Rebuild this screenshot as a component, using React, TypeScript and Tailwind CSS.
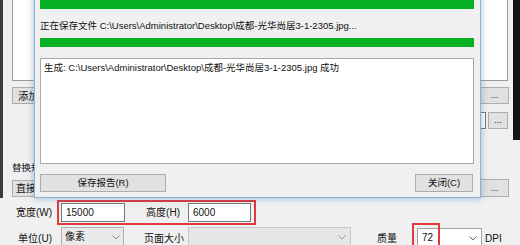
import React from "react";

const Chevron = ({ color = "#606060" }: { color?: string }) => (
  <svg width="8" height="5" viewBox="0 0 8 5" className="shrink-0">
    <polyline points="0.5,0.5 4,4 7.5,0.5" fill="none" stroke={color} strokeWidth="1" />
  </svg>
);

const Btn = ({ className = "", children }: { className?: string; children?: React.ReactNode }) => (
  <div className={`flex items-center justify-center border border-[#adadad] bg-[#e1e1e1] ${className}`}>{children}</div>
);

export default function App() {
  return (
    <div className="relative w-[520px] h-[245px] overflow-hidden bg-[#f0f0f0] text-[9.5px] leading-[14px] text-[#111] font-['Liberation_Sans','Noto_Sans_CJK_SC',sans-serif]">
      <div className="flex h-full">
        {/* left edge */}
        <div className="w-[3px] h-[198px] bg-[#3c3c3c] shrink-0" />
        {/* main */}
        <div className="flex-1 flex flex-col">
          {/* listbox */}
          <div className="ml-[9px] w-[496px] h-[81px] bg-white border-x border-b border-[#9a9a9a] shrink-0" />
          {/* row 1 */}
          <div className="mt-[6px] flex items-start ml-[9px] w-[497px] justify-between">
            <Btn className="w-[75px] h-[17px] justify-start pl-[5px] text-[10.5px]">添加文件</Btn>
            <Btn className="w-[29px] h-[17px] text-[9px] leading-none">...</Btn>
          </div>
          {/* row 2 */}
          <div className="mt-[8px] flex items-start ml-[9px] w-[496px] justify-end gap-[2px]">
            <div className="w-[200px] h-[17px] bg-white border border-[#7a7a7a]" />
            <Btn className="w-[20px] h-[17px] text-[9px] leading-none">...</Btn>
          </div>
          {/* replace label */}
          <div className="mt-[32px] ml-[9px] h-[14px]">替换规则</div>
          {/* row 3 */}
          <div className="mt-[4px] flex items-start ml-[9px] w-[497px] justify-between">
            <Btn className="w-[75px] h-[17px] mt-[1px] justify-start pl-[3px] text-[10px]">直接保存</Btn>
            <Btn className="w-[29px] h-[18px] text-[9px] leading-none">...</Btn>
          </div>
          {/* bottom row 1 */}
          <div className="mt-[3px] flex items-center h-[25px]">
            <div className="w-[50px] text-right pr-[1px] text-[10px]">宽度(W)</div>
            <div className="ml-[4px] flex items-center h-[25px] border-2 border-[#e0393e] pl-[2px] pr-[3px]">
              <div className="w-[64px] h-[19px] bg-white border border-[#7a7a7a] pl-[4px] flex items-center text-[10px]">15000</div>
              <div className="w-[63px] pr-[8px] text-right text-[10px]">高度(H)</div>
              <div className="w-[63px] h-[19px] bg-white border border-[#7a7a7a] pl-[4px] flex items-center text-[10px]">6000</div>
            </div>
          </div>
          {/* bottom row 2 */}
          <div className="mt-[2px] flex items-start text-[10px]">
            <div className="w-[49px] text-right mt-[5px]">单位(U)</div>
            <div className="ml-[9px] w-[63px] h-[20px] bg-[#e9e9e9] border border-[#b0b0b0] flex items-center justify-between pl-[3px] pr-[3px]">
              <span>像素</span>
              <Chevron color="#8a8a8a" />
            </div>
            <div className="ml-[20px] mt-[5px] w-[40px]">页面大小</div>
            <div className="ml-[4px] w-[163px] h-[20px] bg-[#e6e6e6] border border-[#c8c8c8] flex items-center justify-end pr-[4px]">
              <Chevron color="#9a9a9a" />
            </div>
            <div className="ml-[26px] mt-[5px] w-[20px]">质量</div>
            <div className="ml-[20px] w-[65px] h-[20px] mt-[1px] bg-white border border-[#a0a0a0] flex items-center justify-between pl-[4px] pr-[4px]">
              <span>72</span>
              <Chevron />
            </div>
            <div className="ml-[3px] mt-[5px]">DPI</div>
          </div>
        </div>
        {/* right edge */}
        <div className="w-[7px] shrink-0 flex flex-col">
          <div className="h-[140px] bg-[#151515]" />
        </div>
      </div>

      {/* red annotation around quality */}
      <div className="absolute left-[412px] top-[223px] w-[28px] h-[26px] border-2 border-[#e0393e]" />

      {/* dialog */}
      <div className="absolute left-[34px] top-[-20px] w-[447px] h-[218px] bg-[#f0f0f0] border border-[#8fb1d1] shadow-[0_0_7px_rgba(40,110,170,0.45)] flex flex-col pl-[5px] pr-[6px] pt-[19px]">
        <div className="h-[9px] bg-[#06b025]" />
        <div className="mt-[9px] h-[16px] leading-[16px] whitespace-nowrap">正在保存文件 C:\Users\Administrator\Desktop\成都-光华尚居3-1-2305.jpg...</div>
        <div className="mt-[4px] h-[9px] bg-[#06b025]" />
        <div className="mt-[11px] h-[106px] bg-white border border-[#a9a9a9] pl-[3px] pt-[2px] whitespace-nowrap">
          生成: C:\Users\Administrator\Desktop\成都-光华尚居3-1-2305.jpg 成功
        </div>
        <div className="mt-[10px] flex items-start">
          <Btn className="w-[126px] h-[18px]">保存报告(R)</Btn>
          <Btn className="ml-auto mr-[1px] w-[58px] h-[18px] border-[#0078d7]">关闭(C)</Btn>
        </div>
      </div>
    </div>
  );
}
